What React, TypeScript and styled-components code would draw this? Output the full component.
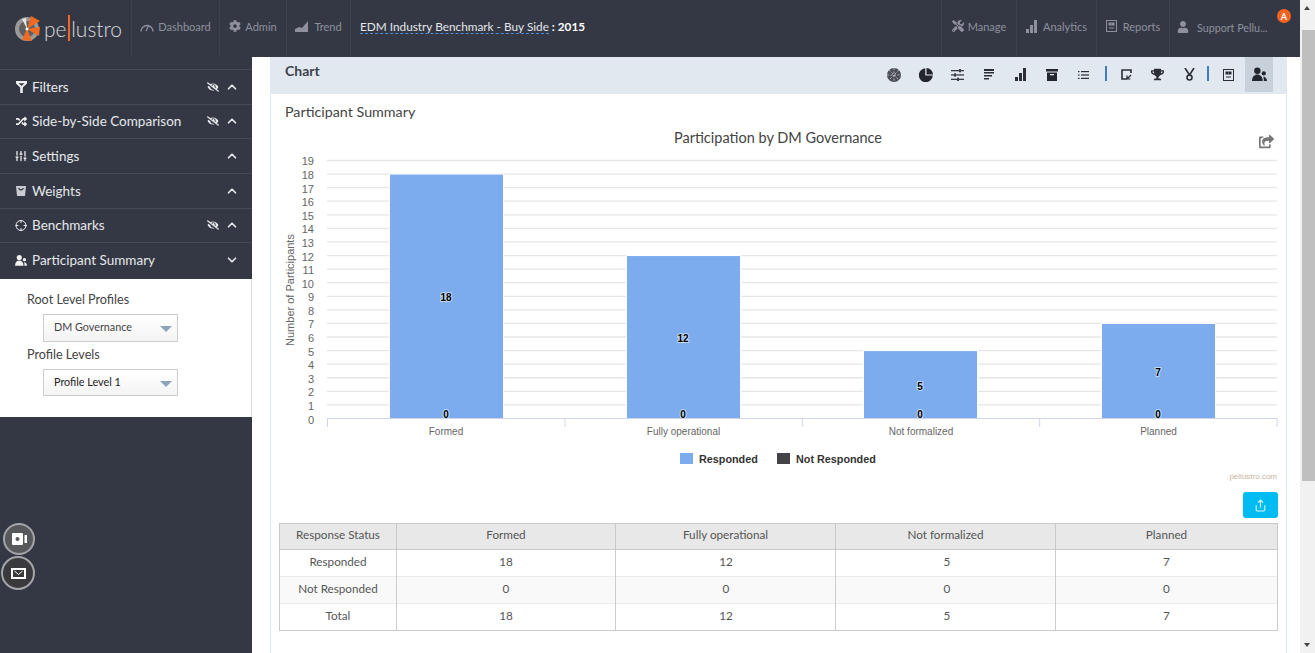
import React from "react";
import styled, { createGlobalStyle } from "styled-components";
import { FaCog, FaEyeSlash, FaRandom, FaTools, FaUser, FaTrophy, FaShareSquare } from "react-icons/fa";
import { LuChevronDown, LuChevronUp, LuCrosshair, LuSlidersVertical, LuShare } from "react-icons/lu";

const GlobalStyle = createGlobalStyle`
  html, body { margin: 0; padding: 0; height: 100%; overflow: hidden; background: #fff; }
  body { font-family: Lato, "Liberation Sans", sans-serif; }
  * { box-sizing: border-box; }
`;

const Shell = styled.div`display: flex; width: 1315px; height: 653px; overflow: hidden; position: relative;`;
const Page = styled.div`width: 1300px; display: flex; flex-direction: column;`;
const Bar = styled.header`height: 57px; background: #343845; display: flex; align-items: stretch; flex: none; position: relative;`;
const LogoBox = styled.div`width: 132px; flex: none; display: flex; align-items: center; padding: 0 0 0 14px; gap: 4px; border-right: 1px solid #3e424f;`;
const LogoText = styled.span`font-size: 21px; font-weight: 300; color: #d8d9dc; line-height: 1; margin-top: -1px; display: inline-flex;`;
const LogoBar = styled.i`
  font-style: normal; position: relative; color: transparent;
  &::after { content: ""; position: absolute; left: 1px; top: -3px; bottom: -2px; width: 2px; background: #f26522; }
`;
const NavItem = styled.div<{ $w: number; $gap?: number }>`
  width: ${p => p.$w}px; flex: none; display: flex; align-items: center; justify-content: center; gap: ${p => p.$gap ?? 4}px;
  color: #8e919b; font-size: 11px; border-right: 1px solid #3e424f; padding-bottom: 5px;
  svg { flex: none; }
`;
const RightNav = styled(NavItem)`border-right: none; border-left: 1px solid #3e424f;`;
const Title = styled.div`flex: 1; display: flex; align-items: center; padding: 0 0 4px 9px; font-size: 11.8px; color: #e3e6ea;`;
const TitleLink = styled.span`border-bottom: 1px dashed #4d8fd6; line-height: 13px;`;
const TitleYear = styled.b`color: #fff; white-space: pre;`;
const UserItem = styled(RightNav)`justify-content: flex-start; padding: 0 0 3px 7px; gap: 8px; font-size: 10.7px;`;
const Badge = styled.span`
  position: absolute; left: 1277px; top: 9px; width: 14px; height: 14px; border-radius: 50%;
  background: #f4621f; color: #fff; font-size: 9px; font-weight: 700; display: flex; align-items: center; justify-content: center;
`;
const Body = styled.div`flex: 1; display: flex; min-height: 0;`;
const Side = styled.aside`width: 252px; flex: none; background: #343845; padding-top: 12px; color: #eceef0;`;
const Row = styled.div`
  height: 34.7px; border-top: 1px solid #484b57; display: flex; align-items: center; padding: 0 13px 0.4px 15px; font-size: 13.5px; gap: 5px;
  color: #e6e8ea;
`;
const RowIcon = styled.span`width: 12px; display: flex; justify-content: center; color: #f0f0f0;`;
const RowLabel = styled.span`flex: 1; white-space: nowrap;`;
const RowTools = styled.span`display: flex; align-items: center; gap: 6px; color: #e6e8ea;`;
const Drawer = styled.div`background: #fff; height: 138px; margin-top: 2px; padding: 13px 0 0 27px; color: #333; border-right: 1px solid #ddd;`;
const FieldLabel = styled.div`font-size: 12.6px; line-height: 16px; color: #444;`;
const Select = styled.div<{ $strong?: boolean; $h: number; $lift: number }>`
  width: 135px; height: ${p => p.$h}px; margin: 6px 0 5px 16px; border: 1px solid #ccc; padding: 0 0 ${p => p.$lift}px 10px;
  display: flex; align-items: center; font-size: 10.8px; color: ${p => (p.$strong ? "#222" : "#444")};
  background: linear-gradient(#fff, #f4f4f4); position: relative;
  &::after { content: ""; position: absolute; right: 5px; top: 11px; border: 6px solid transparent; border-top: 6px solid #8ea4bc; border-bottom: 0; }
`;
const Main = styled.main`flex: 1; padding: 0 13px 0 18px; min-width: 0;`;
const Panel = styled.section`height: 100%; border-left: 1px solid #dfe8f2; border-right: 1px solid #dfe8f2; display: flex; flex-direction: column;`;
const Head = styled.div`height: 37px; background: #e1e8ef; display: flex; flex: none; justify-content: space-between; padding-left: 14px; margin-right: -1px;`;
const HeadTitle = styled.h2`margin: 5px 0 0; font-size: 14px; font-weight: 700; color: #3c414d; line-height: 18px;`;
const Tools = styled.div`display: flex; align-items: flex-start; padding-right: 14px; height: 35px;`;
const Tool = styled.span<{ $on?: boolean }>`
  width: ${p => (p.$on ? 28 : 31.5)}px; height: 35px; display: flex; align-items: center; justify-content: center; color: #2b2e36; flex: none;
  background: ${p => (p.$on ? "#c8d1d9" : "transparent")}; margin-left: ${p => (p.$on ? 1 : 0)}px;
`;
const Sep = styled.span<{ $l: number }>`width: 2px; height: 15px; margin: 9px 3.25px 0 ${p => p.$l}px; background: #3f7cc0; flex: none;`;
const Sub = styled.h3`margin: 9px 0 0 14px; font-size: 14.3px; font-weight: 400; color: #444; line-height: 18px;`;
const Chart = styled.svg`display: block; width: 1015px; height: 365px; flex: none; margin-top: 4px;`;
const ExportRow = styled.div`display: flex; justify-content: flex-end; padding-right: 8px; margin-top: 2px; height: 31px;`;
const ExportBtn = styled.button`
  width: 35px; height: 26px; border: none; border-radius: 3px; background: #00bcf2; color: #dff6ff; padding: 0;
  display: flex; align-items: center; justify-content: center;
`;
const Table = styled.table`
  margin-left: 8px; width: 998px; height: 108px; border-collapse: collapse; table-layout: fixed; font-size: 11.7px; color: #555; border: 1px solid #ccc;
  th { font-weight: 400; background: #e8e8e8; height: 26px; border: 1px solid #c8c8c8; padding: 0 0 5px; }
  td { text-align: center; border-top: 1px solid #eaeaea; border-left: 1px solid #ccc; border-right: 1px solid #ccc; height: 27px; padding: 0 0 4px; }
  td:nth-child(3) { padding-left: 1px; }
  td:nth-child(4) { padding-left: 3px; }
  tr:nth-child(even) td { background: #f9f9f9; }
`;
const Scroll = styled.div`width: 15px; flex: none; background: #f1f1f1; position: relative;`;
const Thumb = styled.div`position: absolute; left: 2px; right: 0; top: 30px; height: 451px; background: #bfbfbf;`;
const Arrow = styled.span<{ $down?: boolean }>`
  position: absolute; left: 4px; ${p => (p.$down ? "bottom: 6px;" : "top: 6px;")}
  border-left: 3.5px solid transparent; border-right: 3.5px solid transparent;
  ${p => (p.$down ? "border-top: 4px solid #444;" : "border-bottom: 4px solid #444;")}
`;
const Float = styled.button<{ $x: number; $y: number; $size: number; $dark?: boolean }>`
  position: absolute; left: ${p => p.$x}px; top: ${p => p.$y}px; width: ${p => p.$size}px; height: ${p => p.$size}px; border-radius: 50%; padding: 0;
  border: 2px solid #a3a5a9; background: ${p => (p.$dark ? "#3a3a3e" : "#57585c")}; color: #fff;
  display: flex; align-items: center; justify-content: center;
`;

const AxisLabel = styled.text`font-family: "Liberation Sans", sans-serif; font-size: 11px; fill: #666;`;
const CatLabel = styled.text`font-family: "Liberation Sans", sans-serif; font-size: 10px; fill: #666; text-anchor: middle;`;
const DataLabel = styled.text`font-family: "Liberation Sans", sans-serif; font-size: 10px; font-weight: 700; fill: #000; text-anchor: middle; paint-order: stroke; stroke: #fff; stroke-width: 2px; stroke-opacity: .55;`;
const LegendText = styled.text`font-family: "Liberation Sans", sans-serif; font-size: 10.8px; font-weight: 700; fill: #333;`;
const ChartTitle = styled.text`font-family: Lato, sans-serif; font-size: 14.5px; fill: #444; text-anchor: middle;`;
const Credit = styled.text`font-family: "Liberation Sans", sans-serif; font-size: 8px; fill: #c8b4a6; text-anchor: end;`;

const LogoMark = () => (
  <svg width="26" height="26" viewBox="0 0 26 26">
    <circle cx="13" cy="13" r="12" fill="#9a9a9a" />
    <circle cx="13" cy="13" r="8" fill="#5f5f5f" />
    <path d="M13 13 L17 0 L26 5 Z M13 13 L26 11 L25 20 Z M13 13 L18 25 L8 24 Z" fill="#f26a21" />
    <path d="M13 13 L8 3 L12 2 Z" fill="#e4e4e4" />
    <circle cx="13" cy="13" r="1.5" fill="#fff" />
  </svg>
);
const Gauge = () => (
  <svg width="14" height="11" viewBox="0 0 14 11" fill="none" stroke="#8e919b" strokeWidth="1.3">
    <path d="M1 10.5 A6 6 0 0 1 13 10.5" /><path d="M6 10 L9 4" />
  </svg>
);
const Area = () => (
  <svg width="13" height="11" viewBox="0 0 13 11" fill="#8e919b"><path d="M0 11 L0 8 L4 6 L7 7 L13 0 L13 11 Z" /></svg>
);
const Bars = ({ c = "#8e919b" }: { c?: string }) => (
  <svg width="11" height="13" viewBox="0 0 11 13" fill={c}><rect y="9" width="3" height="4" /><rect x="4" y="5" width="3" height="8" /><rect x="8" width="3" height="13" /></svg>
);
const Doc = ({ c = "#8e919b" }: { c?: string }) => (
  <svg width="11" height="12" viewBox="0 0 11 12" fill="none" stroke={c}>
    <rect x=".5" y=".5" width="10" height="11" /><rect x="3" y="3" width="2" height="2" fill={c} /><rect x="6" y="3" width="2" height="2" fill={c} /><path d="M3 8h5" />
  </svg>
);
const Weight = () => (
  <svg width="12" height="12" viewBox="0 0 12 12" fill="#c9cbd0"><path d="M1 1h10l-1 10H2z" /><path d="M3.5 3 Q6 7 8.5 3" stroke="#343845" fill="none" strokeWidth="1.3" /></svg>
);
const Funnel = () => (
  <svg width="11" height="12" viewBox="0 0 11 12" fill="#f0f0f0"><path d="M0 0h11v2.5L6.8 6.5V12H4.2V6.5L0 2.5z" /><path d="M2.5 2.2h6L5.5 5z" fill="#343845" /></svg>
);
const People = ({ c, s }: { c: string; s: number }) => (
  <svg width={s} height={s} viewBox="0 0 14 14" fill={c}>
    <circle cx="5" cy="3.5" r="3" /><path d="M0 13 C0 9 2.5 7 5 7 C7.5 7 10 9 10 13z" />
    <circle cx="11" cy="6" r="2" /><path d="M10.5 9 C12.5 9 14 10.5 14 13 H11 C11 11.5 11 10 10.5 9z" />
  </svg>
);
const Camera = () => (
  <svg width="15" height="12" viewBox="0 0 15 12"><rect width="11" height="12" rx="1" fill="#fff" /><circle cx="5.5" cy="6" r="2" fill="#57585c" /><rect x="12.5" y="2" width="2.5" height="8" fill="#fff" /></svg>
);
const Mail = () => (
  <svg width="15" height="11" viewBox="0 0 15 11" fill="none"><rect x="1" y="1" width="13" height="9" stroke="#fff" strokeWidth="2" fill="#3a3a3e" /><path d="M3.5 3 L7.5 6.5 L11.5 3" stroke="#fff" /></svg>
);
const Hatch = () => (
  <svg width="14" height="14" viewBox="0 0 14 14" fill="none">
    <circle cx="7" cy="7" r="7" fill="#4a4d55" />
    <path d="M7 0v14M0 7h14M2 2l10 10M12 2L2 12" stroke="#b4b8bf" strokeWidth="1" strokeDasharray="2 1.5" />
  </svg>
);
const Pie = () => (
  <svg width="14" height="14" viewBox="0 0 14 14" fill="#23262d"><path d="M6.3 .2 V7.6 H13.8 A7 7 0 1 1 6.3 .2z" /><path d="M7.5 0 A6.5 6.5 0 0 1 14 6.5 H7.5z" /></svg>
);
const Sliders = () => (
  <svg width="13" height="12" viewBox="0 0 13 12" fill="#3a3d45">
    <rect y="1" width="13" height="1.3" /><rect x="8" width="2" height="3.3" /><rect y="5.3" width="13" height="1.3" /><rect x="3" y="4.3" width="2" height="3.3" /><rect y="9.7" width="13" height="1.3" /><rect x="6" y="8.7" width="2" height="3.3" />
  </svg>
);
const Lines = () => (
  <svg width="10" height="11" viewBox="0 0 10 11" fill="#2b2e36"><rect width="10" height="2" /><rect y="3" width="10" height="1.5" /><rect y="6" width="8" height="1.5" /><rect y="9" width="5" height="1.5" /></svg>
);
const Box = () => (
  <svg width="12" height="12" viewBox="0 0 12 12" fill="#23262d"><rect width="12" height="2.5" /><path d="M1 3.5h10V12H1z" /><rect x="4" y="5" width="4" height="1.3" fill="#e1e8ef" /></svg>
);
const ListIcon = () => (
  <svg width="11" height="8" viewBox="0 0 11 8" fill="#2b2e36"><rect width="1.5" height="1.2" /><rect x="3" width="8" height="1.2" /><rect y="3.4" width="1.5" height="1.2" /><rect x="3" y="3.4" width="8" height="1.2" /><rect y="6.8" width="1.5" height="1.2" /><rect x="3" y="6.8" width="8" height="1.2" /></svg>
);
const Note = () => (
  <svg width="11" height="11" viewBox="0 0 11 11" fill="none" stroke="#2b2e36" strokeWidth="1.6"><path d="M10 4V1H1v9h5" /><path d="M6 10l4-4M6 6.5V10h3.5" strokeWidth="1.2" /></svg>
);
const Medal = () => (
  <svg width="11" height="13" viewBox="0 0 11 13" fill="none" stroke="#2b2e36" strokeWidth="1.6"><path d="M1 0 L5.5 7 L10 0" /><circle cx="5.5" cy="9.5" r="2.5" /></svg>
);

const hide = <FaEyeSlash size={12} />;
const up = <LuChevronUp size={14} strokeWidth={3} />;
const rows: [React.ReactNode, string, boolean, boolean][] = [
  [<Funnel />, "Filters", true, true],
  [<FaRandom size={11} />, "Side-by-Side Comparison", true, true],
  [<LuSlidersVertical size={12} strokeWidth={2.5} />, "Settings", false, true],
  [<Weight />, "Weights", false, true],
  [<LuCrosshair size={13} />, "Benchmarks", true, true],
  [<People c="#f0f0f0" s={13} />, "Participant Summary", false, false],
];

const cats = ["Formed", "Fully operational", "Not formalized", "Planned"];
const bars = [18, 12, 5, 7];
const barX = [390, 627, 864, 1102];
const toY = (v: number) => 418.5 - v * 13.58;
const ticks = Array.from({ length: 20 }, (_, i) => i);
const table = [
  ["Responded", 18, 12, 5, 7],
  ["Not Responded", 0, 0, 0, 0],
  ["Total", 18, 12, 5, 7],
];

export default function App() {
  return (
    <Shell>
      <GlobalStyle />
      <Page>
        <Bar>
          <LogoBox><LogoMark /><LogoText>pe<LogoBar>l</LogoBar>lustro</LogoText></LogoBox>
          <NavItem $w={88}><Gauge />Dashboard</NavItem>
          <NavItem $w={67}><FaCog size={12} />Admin</NavItem>
          <NavItem $w={64} $gap={6}><Area />Trend</NavItem>
          <Title><TitleLink>EDM Industry Benchmark - Buy Side</TitleLink><TitleYear> : 2015</TitleYear></Title>
          <RightNav $w={75}><FaTools size={12} />Manage</RightNav>
          <RightNav $w={80} $gap={6}><Bars />Analytics</RightNav>
          <RightNav $w={73} $gap={6}><Doc />Reports</RightNav>
          <UserItem $w={131}><FaUser size={12} />Support Pellu...</UserItem>
          <Badge>A</Badge>
        </Bar>
        <Body>
          <Side>
            {rows.map(([icon, label, eye, isUp]) => (
              <Row key={label}>
                <RowIcon>{icon}</RowIcon>
                <RowLabel>{label}</RowLabel>
                <RowTools>{eye && hide}{isUp ? up : <LuChevronDown size={14} strokeWidth={3} />}</RowTools>
              </Row>
            ))}
            <Drawer>
              <FieldLabel>Root Level Profiles</FieldLabel>
              <Select $h={28} $lift={3}>DM Governance</Select>
              <FieldLabel>Profile Levels</FieldLabel>
              <Select $h={27} $lift={2} $strong>Profile Level 1</Select>
            </Drawer>
          </Side>
          <Main>
            <Panel>
              <Head>
                <HeadTitle>Chart</HeadTitle>
                <Tools>
                  <Tool><Hatch /></Tool>
                  <Tool><Pie /></Tool>
                  <Tool><Sliders /></Tool>
                  <Tool><Lines /></Tool>
                  <Tool><Bars c="#2b2e36" /></Tool>
                  <Tool><Box /></Tool>
                  <Tool><ListIcon /></Tool>
                  <Sep $l={6.25} />
                  <Tool><Note /></Tool>
                  <Tool><FaTrophy size={13} /></Tool>
                  <Tool><Medal /></Tool>
                  <Sep $l={2.25} />
                  <Tool><Doc c="#2b2e36" /></Tool>
                  <Tool $on><People c="#23262d" s={15} /></Tool>
                </Tools>
              </Head>
              <Sub>Participant Summary</Sub>
              <Chart viewBox="271 125 1015 365">
                <ChartTitle x={778} y={143}>Participation by DM Governance</ChartTitle>
                <g transform="translate(1259 134)" color="#777"><FaShareSquare size={15} /></g>
                {ticks.map(t => (
                  <g key={t}>
                    {t > 0 && <line x1={327} x2={1277} y1={toY(t)} y2={toY(t)} stroke="#e6e6e6" strokeWidth={1.3} />}
                    <AxisLabel x={314} y={toY(t) + 5} textAnchor="end">{t}</AxisLabel>
                  </g>
                ))}
                <AxisLabel x={294} y={290} textAnchor="middle" transform="rotate(-90 294 290)">Number of Participants</AxisLabel>
                {bars.map((v, i) => (
                  <g key={cats[i]}>
                    <rect x={barX[i] - 1} y={toY(v) - 0.5} width={115} height={419 - toY(v)} fill="#fff" />
                    <rect x={barX[i]} y={toY(v) + 0.5} width={113} height={418 - toY(v)} fill="#7cacee" />
                    <DataLabel x={barX[i] + 56} y={(toY(v) + 418.5) / 2 + 5}>{v}</DataLabel>
                    <DataLabel x={barX[i] + 56} y={417.5}>0</DataLabel>
                    <CatLabel x={446 + i * 237.5} y={435}>{cats[i]}</CatLabel>
                  </g>
                ))}
                <line x1={327} x2={1277} y1={418.5} y2={418.5} stroke="#ccd6eb" />
                {[0, 1, 2, 3, 4].map(i => (
                  <line key={i} x1={327.5 + i * 237.4} x2={327.5 + i * 237.4} y1={418} y2={427} stroke="#ccd6eb" />
                ))}
                <rect x={680} y={453} width={13} height={11} fill="#7cacee" />
                <LegendText x={699} y={463}>Responded</LegendText>
                <rect x={777} y={453} width={13} height={11} fill="#434348" />
                <LegendText x={796} y={463}>Not Responded</LegendText>
                <Credit x={1277} y={479}>pellustro.com</Credit>
              </Chart>
              <ExportRow><ExportBtn><LuShare size={13} /></ExportBtn></ExportRow>
              <Table>
                <colgroup>
                  <col style={{ width: 117 }} /><col style={{ width: 219 }} /><col style={{ width: 220 }} /><col style={{ width: 220 }} /><col style={{ width: 222 }} />
                </colgroup>
                <thead>
                  <tr><th>Response Status</th>{cats.map(c => <th key={c}>{c}</th>)}</tr>
                </thead>
                <tbody>
                  {table.map(r => (
                    <tr key={r[0]}>{r.map((c, i) => <td key={i}>{c}</td>)}</tr>
                  ))}
                </tbody>
              </Table>
            </Panel>
          </Main>
        </Body>
      </Page>
      <Scroll><Arrow /><Thumb /><Arrow $down /></Scroll>
      <Float $x={3} $y={523} $size={32}><Camera /></Float>
      <Float $x={1} $y={556} $size={34} $dark><Mail /></Float>
    </Shell>
  );
}
